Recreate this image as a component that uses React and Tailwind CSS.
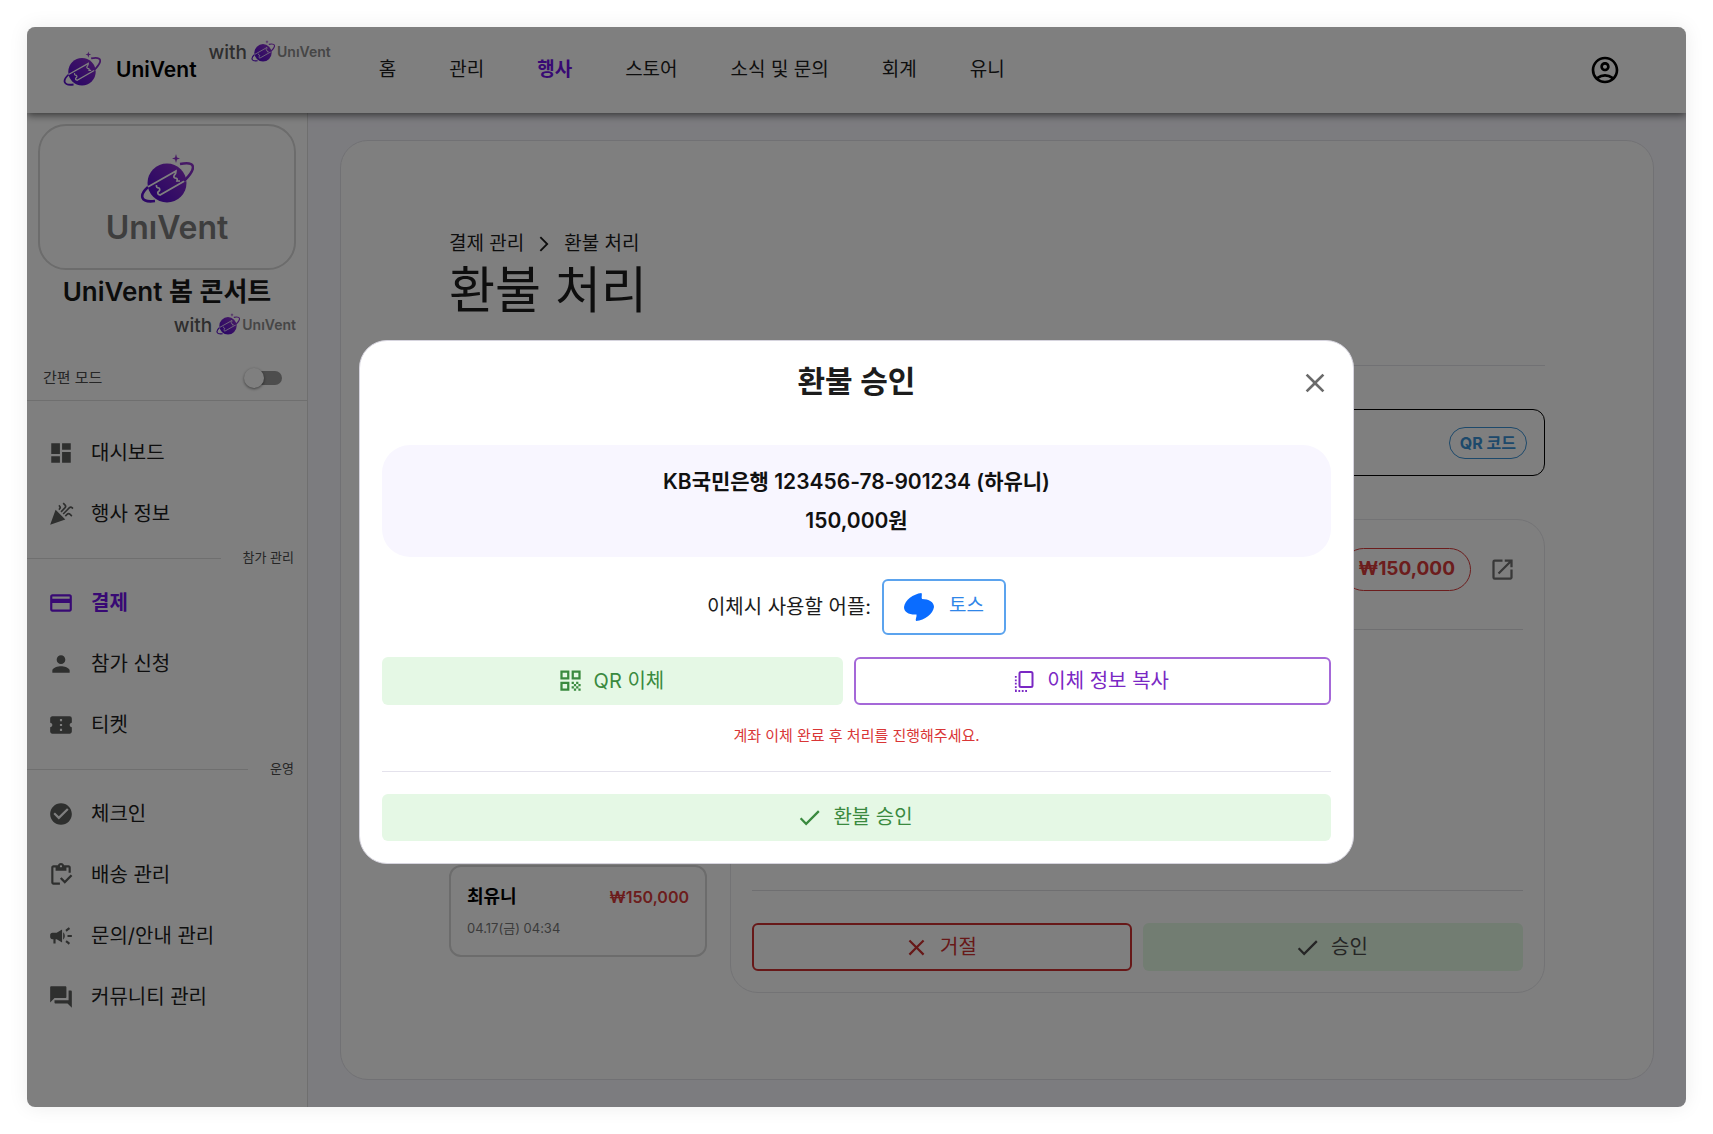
import clsx from 'clsx'
import {
  MdArrowForwardIos,
  MdCampaign,
  MdCelebration,
  MdCheck,
  MdCheckCircle,
  MdClose,
  MdConfirmationNumber,
  MdCreditCard,
  MdDashboard,
  MdForum,
  MdOpenInNew,
  MdOutlineAccountCircle,
  MdOutlineInventory,
  MdPerson,
  MdQrCode,
} from 'react-icons/md'

const NAV = ['홈', '관리', '행사', '스토어', '소식 및 문의', '회계', '유니']

const MENU = [
  {
    items: [
      { label: '대시보드', Icon: MdDashboard },
      { label: '행사 정보', Icon: MdCelebration },
    ],
  },
  {
    title: '참가 관리',
    items: [
      { label: '결제', Icon: MdCreditCard, active: true },
      { label: '참가 신청', Icon: MdPerson },
      { label: '티켓', Icon: MdConfirmationNumber },
    ],
  },
  {
    title: '운영',
    items: [
      { label: '체크인', Icon: MdCheckCircle },
      { label: '배송 관리', Icon: MdOutlineInventory },
      { label: '문의/안내 관리', Icon: MdCampaign },
      { label: '커뮤니티 관리', Icon: MdForum },
    ],
  },
]

function Planet({ className }) {
  return (
    <svg viewBox="0 0 54 50" className={className} aria-hidden="true">
      <defs>
        <linearGradient id="planet" x1="0" y1="1" x2="1" y2="0">
          <stop offset="0.2" stopColor="#5a10cc" />
          <stop offset="1" stopColor="#9236cc" />
        </linearGradient>
      </defs>
      <circle cx="27" cy="29" r="19.5" fill="url(#planet)" />
      {/* ticket cut out of the planet */}
      <path
        d="M6 34 L36 17 Q36 20 34.5 21 Q33 23 35 24 Q38 24 37 27 L40 27 M48 25 L20 41 Q17 40 18 38 Q21 36 19 34 Q16 34 16.500 31"
        fill="none"
        stroke="#fff"
        strokeWidth="1.7"
      />
      {/* ring */}
      <path
        d="M8 33 C-1 41 0 49 15 47 M40 10 C56 7 57 14 44 27"
        fill="none"
        stroke="url(#planet)"
        strokeWidth="2.6"
      />
      <path d="M36 0 L37 3.500 L40 4.500 L37 5.500 L36 9 L35 5.500 L32 4.500 L35 3.500 Z" fill="#9236cc" />
    </svg>
  )
}

function CopyIcon({ className }) {
  return (
    <svg viewBox="0 0 24 24" className={className} aria-hidden="true">
      <rect x="7.500" y="3" width="13" height="15" rx="1.500" fill="none" stroke="currentColor" strokeWidth="2" />
      <path
        d="M3.800 7v14M3 22h13"
        fill="none"
        stroke="currentColor"
        strokeWidth="1.800"
        strokeDasharray="1.800 1.600"
      />
    </svg>
  )
}

function TossIcon({ className }) {
  return (
    <svg viewBox="0 0 30 28" className={className} aria-hidden="true">
      <path
        d="M17.500 0 C18.500 2 17 4 18 6 C25 6 30 9 30 14 C29 21 21 27 12 28 C11 26 13 24 12.500 21.500 C5 22 0 19 0 14 C1 7 9 1 17.500 0 Z"
        fill="#0a6cff"
      />
    </svg>
  )
}

function WithUniVent({ className }) {
  return (
    <div className={clsx('flex items-center', className)}>
      <span className="mr-1 text-[19px] leading-7 font-medium text-[#5c5c5c]">with</span>
      <Planet className="mb-1 size-6" />
      <span className="mb-0.5 ml-0.5 text-sm font-semibold text-[#8c8c8c]">UnıVent</span>
    </div>
  )
}

function Header() {
  return (
    <header className="z-10 flex h-[86px] shrink-0 items-center bg-white pr-[65px] pl-9 shadow-[0_2px_8px_rgba(0,0,0,0.6)]">
      <a href="#main" className="flex items-center gap-[15px]">
        <Planet className="mb-0.5 h-9 w-[38px]" />
        <span className="text-[21px] font-semibold text-black">UniVent</span>
      </a>
      <WithUniVent className="ml-3 self-start pt-3" />
      <nav className="ml-12 flex gap-[53px]">
        {NAV.map((label) => (
          <a
            key={label}
            href={`#${label}`}
            className={clsx(
              'text-[19px]',
              label === '행사' ? 'font-bold text-[#7012e8]' : 'text-[#1c1c1c]',
            )}
          >
            {label}
          </a>
        ))}
      </nav>
      <button type="button" aria-label="내 계정" className="ml-auto text-black">
        <MdOutlineAccountCircle className="size-8" />
      </button>
    </header>
  )
}

function Sidebar() {
  return (
    <aside className="flex w-[281px] shrink-0 flex-col border-r border-[#dedede] bg-white">
      <div className="flex flex-col px-[11px] pt-[11px]">
        <div className="flex h-[146px] flex-col items-center justify-center gap-1 rounded-[28px] border-2 border-[#d8d8d8] pt-2">
          <Planet className="h-[50px] w-[54px]" />
          <span className="text-[32px] leading-10 font-semibold text-[#7c7c7c]">UnıVent</span>
        </div>
        <h2 className="mt-1 text-center text-[26px] leading-9 font-semibold text-[#181818]">
          UniVent 봄 콘서트
        </h2>
        <WithUniVent className="mt-0.5 self-end" />
      </div>
      <label className="mt-3 flex h-[49px] items-center justify-between border-b border-[#dedede] pt-1 pr-[25px] pl-4 text-[15px] text-[#4c4c4c]">
        간편 모드
        <input
          type="checkbox"
          role="switch"
          className="relative h-3.5 w-[34px] appearance-none rounded-full bg-[#9a9a9a] before:absolute before:-top-[3px] before:-left-1 before:size-5 before:rounded-full before:bg-white before:shadow-[0_1px_3px_rgba(0,0,0,0.5)]"
        />
      </label>
      <nav className="flex flex-col pt-[21px]">
        {MENU.map((group, i) => (
          <div key={i}>
            {group.title && (
              <div className="flex h-7 items-center gap-[22px] pr-[13px] text-[13px] text-[#4c4c4c]">
                <hr className="flex-1 border-[#dedede]" />
                {group.title}
              </div>
            )}
            {group.items.map(({ label, Icon, active }) => (
              <a
                key={label}
                href={`#${label}`}
                className={clsx(
                  'flex h-[61px] items-center gap-[17px] pl-[21px] text-xl',
                  active ? 'font-bold text-[#7012e8]' : 'text-[#1c1c1c]',
                )}
              >
                <Icon className={clsx('size-[26px]', !active && 'text-[#5c5e5c]')} />
                {label}
              </a>
            ))}
          </div>
        ))}
      </nav>
    </aside>
  )
}

function RefundDetail() {
  return (
    <section className="flex h-[474px] flex-1 flex-col rounded-[28px] border border-[#e6e6ea] px-[21px] pb-[21px]">
      <div className="flex h-[109px] items-center justify-end gap-[18px] pr-[7px] pb-2.5">
        <span className="flex h-[43px] items-center rounded-full border border-[#d93a3a] px-[15px] text-[19px] font-bold text-[#d93a3a]">
          ₩150,000
        </span>
        <a href="#detail" aria-label="새 창에서 열기" className="text-[#707070]">
          <MdOpenInNew className="size-[27px]" />
        </a>
      </div>
      <hr className="border-[#dedee2]" />
      <hr className="mt-auto border-[#dedee2]" />
      <div className="mt-8 grid grid-cols-2 gap-[11px]">
        <button
          type="button"
          className="flex h-12 items-center justify-center gap-2.5 rounded-md border-2 border-[#cf3030] text-xl text-[#cf3030]"
        >
          <MdClose className="-ml-1 size-[27px]" />
          거절
        </button>
        <button
          type="button"
          className="flex h-12 items-center justify-center gap-2.5 rounded-md bg-[#e4fae4] text-xl text-[#4a4a4a]"
        >
          <MdCheck className="-ml-1 size-[27px]" />
          승인
        </button>
      </div>
    </section>
  )
}

function RefundPage() {
  return (
    <main className="flex-1 bg-[#f9f8ff] px-8 py-[27px]">
      <div className="h-full rounded-[28px] border border-[#e2e2e8] bg-white px-[108px] pt-[89px]">
        <nav
          aria-label="위치"
          className="flex items-center gap-[11px] text-[19px] leading-7 text-[#1c1c1c]"
        >
          <a href="#payments">결제 관리</a>
          <MdArrowForwardIos className="size-[18px]" />
          <span>환불 처리</span>
        </nav>
        <h1 className="text-[50px] leading-[64px] text-[#1c1c1c]">환불 처리</h1>
        <hr className="mt-[43px] border-[#e2e2e8]" />
        <div className="mt-[43px] flex h-[67px] items-center justify-end rounded-xl border border-black pr-[17px]">
          <button
            type="button"
            className="h-8 rounded-full border border-[#3a92d6] px-2.5 font-bold text-[#3a92d6]"
          >
            QR 코드
          </button>
        </div>
        <div className="mt-[43px] flex gap-[23px]">
          <div className="flex w-[258px] flex-col justify-end pb-9">
            <button
              type="button"
              className="flex h-[92px] flex-col items-start justify-center gap-2 rounded-xl border-2 border-[#d8d8d8] px-4"
            >
              <span className="flex w-full items-center justify-between">
                <span className="text-lg font-semibold text-black">최유니</span>
                <span className="font-semibold text-[#d93a3a]">₩150,000</span>
              </span>
              <span className="text-[13px] text-[#777]">04.17(금) 04:34</span>
            </button>
          </div>
          <RefundDetail />
        </div>
      </div>
    </main>
  )
}

function RefundDialog() {
  return (
    <div className="absolute inset-0 z-20 flex items-center justify-center bg-black/50 pt-[69px]">
      <div
        role="dialog"
        aria-modal="true"
        aria-labelledby="refund-title"
        className="w-3/5 rounded-[28px] border border-[#d6d4de] bg-white px-[22px] pb-[22px]"
      >
        <div className="grid h-20 grid-cols-[1fr_auto_1fr] items-center">
          <h2 id="refund-title" className="col-start-2 text-3xl font-semibold text-[#1c1c1c]">
            환불 승인
          </h2>
          <button type="button" aria-label="닫기" className="mt-1 justify-self-end text-[#6a6a6a]">
            <MdClose className="size-8" />
          </button>
        </div>

        <div className="mt-6 rounded-[28px] bg-[#f8f6ff] py-[17px] text-center text-[21px] leading-[39px] font-semibold text-[#111]">
          <p>KB국민은행 123456-78-901234 (하유니)</p>
          <p>150,000원</p>
        </div>

        <div className="mt-[22px] flex items-center justify-center gap-[11px] text-xl text-[#1c1c1c]">
          이체시 사용할 어플:
          <a
            href="#toss"
            className="flex h-14 items-center gap-[15px] rounded-md border-2 border-[#5ba3ee] px-5 text-[19px] text-[#2f86e8]"
          >
            <TossIcon className="h-7 w-[30px]" />
            토스
          </a>
        </div>

        <div className="mt-[22px] grid grid-cols-[29fr_30fr] gap-[11px] text-xl">
          <button
            type="button"
            className="flex h-12 items-center justify-center gap-2.5 rounded-md bg-[#e5f8e5] text-[#3a8a3f]"
          >
            <MdQrCode className="-ml-1 size-[27px]" />
            QR 이체
          </button>
          <button
            type="button"
            className="flex h-12 items-center justify-center gap-[11px] rounded-md border-2 border-[#a568d8] text-[#7a28c4]"
          >
            <CopyIcon className="-ml-1 size-6" />
            이체 정보 복사
          </button>
        </div>

        <p className="mt-5 text-center text-[15px] leading-[22px] text-[#d93636]">
          계좌 이체 완료 후 처리를 진행해주세요.
        </p>
        <hr className="mt-6 border-[#e4e2ec]" />
        <button
          type="button"
          className="mt-[22px] flex h-[47px] w-full items-center justify-center gap-2.5 rounded-md bg-[#e5f8e5] text-xl text-[#3a8a3f]"
        >
          <MdCheck className="-ml-1 size-[27px]" />
          환불 승인
        </button>
      </div>
    </div>
  )
}

export default function App() {
  return (
    <div className="flex min-h-screen flex-col bg-white p-[27px] font-['Inter','Noto_Sans_CJK_KR',sans-serif]">
      <div className="relative flex flex-1 flex-col overflow-hidden rounded-lg shadow-[0_0_20px_rgba(0,0,0,0.08)]">
        <Header />
        <div className="flex flex-1">
          <Sidebar />
          <RefundPage />
        </div>
        <RefundDialog />
      </div>
    </div>
  )
}
